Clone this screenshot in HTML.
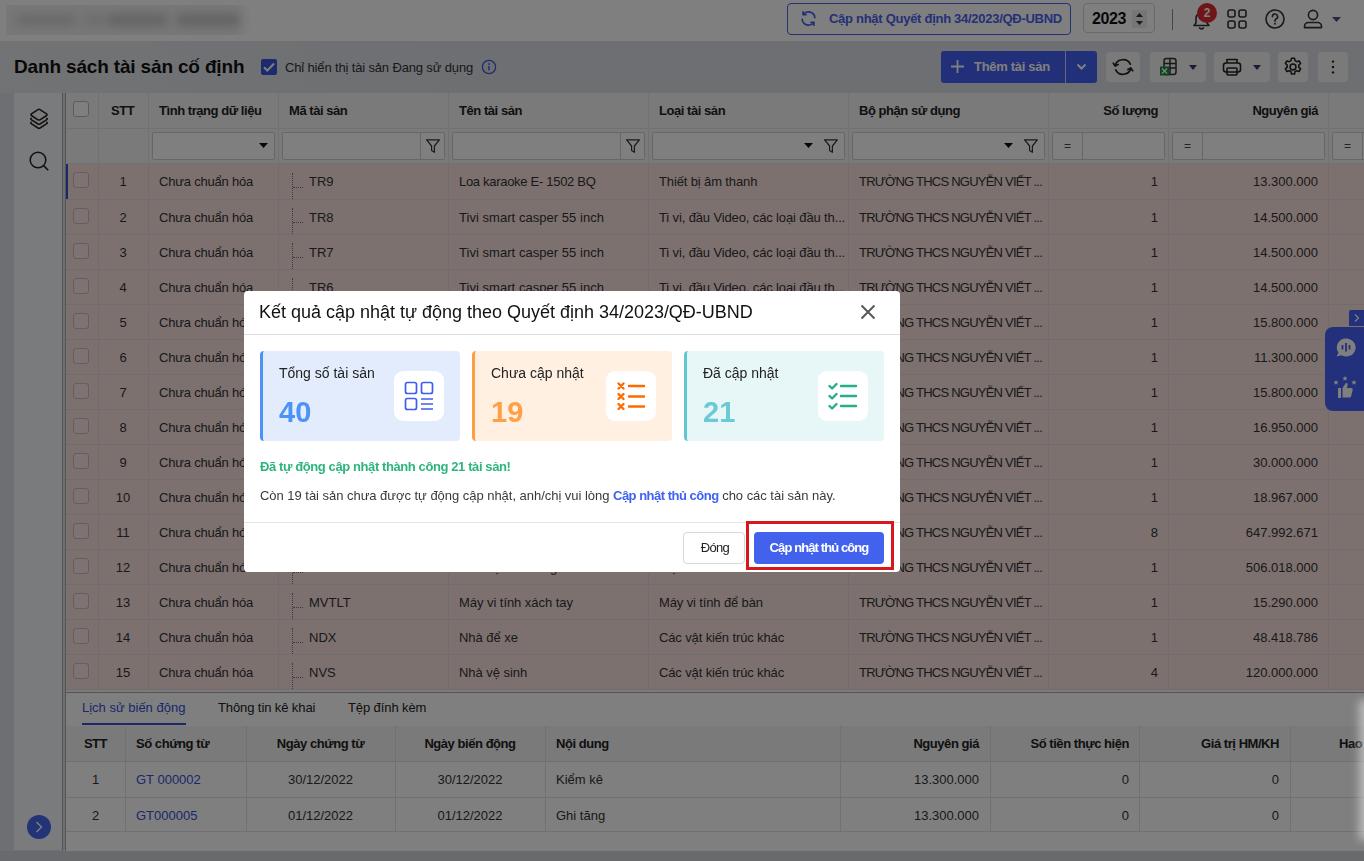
<!DOCTYPE html>
<html><head><meta charset="utf-8">
<style>
*{box-sizing:border-box;margin:0;padding:0}
svg{display:block}
html,body{width:1364px;height:861px;overflow:hidden}
body{font-family:"Liberation Sans",sans-serif;font-size:13px;color:#212121;background:#dcdfe5;position:relative}
.a{position:absolute}
.t{position:absolute;white-space:nowrap;line-height:16px}
.topbar{left:0;top:0;width:1364px;height:41px;background:#fff}
.hdr{left:0;top:41px;width:1364px;height:52px;background:linear-gradient(90deg,#e4e6ea 0,#dcdfe5 35%)}
.side{left:14px;top:93px;width:48px;height:757px;background:#f5f6f8}
.vline{top:93px;width:1px;height:757px;background:#a6a8ac}
.grid{left:66px;top:93px;width:1298px;height:600px;background:#f4f4f4;overflow:hidden}
.hcell{font-weight:700;color:#222;letter-spacing:-0.45px}
.row{position:absolute;left:0;width:1298px;height:35px;background:#fae2df;border-bottom:1px solid #e6d8d8}
.cb{position:absolute;width:16px;height:16px;border:1px solid #b9b9b9;border-radius:3px;background:#fff}
.vb{position:absolute;top:0;width:1px;height:599px;background:#e3e3e3}
.fbox{position:absolute;top:39px;height:28px;border:1px solid #cfcfcf;border-radius:2px;background:#fff}
.bottom{left:66px;top:693px;width:1298px;height:158px;background:#fff;overflow:hidden}
.overlay{left:0;top:0;width:1364px;height:861px;background:rgba(0,0,0,0.5)}
.modal{left:244px;top:291px;width:656px;height:281px;background:#fff;border-radius:4px;overflow:hidden;will-change:transform}
.card{position:absolute;top:60px;width:200px;height:90px;border-radius:4px}
.ibox{position:absolute;left:131px;top:20px;width:50px;height:50px;background:#fff;border-radius:9px}
.clabel{position:absolute;left:16px;top:13px;font-size:14px;line-height:18px;color:#222;white-space:nowrap}
.cnum{position:absolute;left:16px;top:45px;font-size:29px;line-height:32px;font-weight:700;white-space:nowrap}
</style></head>
<body>

<div class="a topbar"></div>
<div class="a" style="left:6px;top:5px;width:246px;height:30px;background:linear-gradient(90deg,#efefef 0,#efefef 93%,#fff 100%);overflow:hidden"><div class="a" style="left:10px;top:10px;width:60px;height:10px;border-radius:5px;background:#cfcfcf;filter:blur(5px)"></div><div class="a" style="left:78px;top:9px;width:20px;height:12px;border-radius:5px;background:#dadada;filter:blur(5px)"></div><div class="a" style="left:100px;top:9px;width:62px;height:12px;border-radius:5px;background:#c9c9c9;filter:blur(5px)"></div><div class="a" style="left:170px;top:9px;width:64px;height:12px;border-radius:5px;background:#c6c6c6;filter:blur(5px)"></div></div>
<div class="a" style="left:787px;top:3px;width:284px;height:32px;border:1px solid #4862ee;border-radius:4px;background:#fff"></div>
<svg class="a" style="left:799px;top:9px" width="19" height="19" viewBox="0 0 24 24"><g fill="none" stroke="#4862ee" stroke-width="2.2" stroke-linecap="round" stroke-linejoin="round"><path d="M20 11a8 8 0 0 0-14.3-4.3"/><path d="M5.2 3.5v3.6h3.6"/><path d="M4 13a8 8 0 0 0 14.3 4.3"/><path d="M18.8 20.5v-3.6h-3.6"/></g></svg>
<div class="t" style="left:829px;top:11px;font-weight:700;color:#4862ee;letter-spacing:-0.28px">Cập nhật Quyết định 34/2023/QĐ-UBND</div>
<div class="a" style="left:1083px;top:3px;width:72px;height:30px;border:1px solid #d2d2d2;border-radius:4px;background:#fff"></div>
<div class="t" style="left:1092px;top:9px;font-size:16px;line-height:19px;color:#111;font-weight:700;letter-spacing:-0.4px">2023</div>
<div class="a" style="left:1132px;top:10px;width:15px;height:18px;background:#ececec"></div>
<svg class="a" style="left:1135px;top:12px" width="9" height="14" viewBox="0 0 9 14"><path d="M4.5 1L8 5H1z M4.5 13L1 9h7z" fill="#333"/></svg>
<div class="a" style="left:1172px;top:9px;width:1px;height:21px;background:#8a8a8a"></div>
<svg class="a" style="left:1191px;top:10px" width="21" height="20" viewBox="0 0 21 20"><path d="M3 15.5h15l-2-2.6V8.3a5.5 5.5 0 0 0-11 0v4.6z" fill="none" stroke="#333" stroke-width="1.6" stroke-linejoin="round"/><path d="M8.3 17.3a2.3 2.3 0 0 0 4.4 0" fill="none" stroke="#333" stroke-width="1.6"/></svg>
<div class="a" style="left:1197px;top:3px;width:20px;height:20px;border-radius:50%;background:#dd2a2f;color:#fff;font-weight:700;font-size:12px;line-height:20px;text-align:center">2</div>
<svg class="a" style="left:1227px;top:9px" width="20" height="20" viewBox="0 0 20 20"><g fill="none" stroke="#333" stroke-width="1.6"><rect x="1" y="1" width="7" height="7" rx="2"/><rect x="12" y="1" width="7" height="7" rx="2"/><rect x="1" y="12" width="7" height="7" rx="2"/><rect x="12" y="12" width="7" height="7" rx="2"/></g></svg>
<svg class="a" style="left:1265px;top:9px" width="20" height="20" viewBox="0 0 20 20"><circle cx="10" cy="10" r="9" fill="none" stroke="#333" stroke-width="1.6"/><path d="M7.4 7.6a2.6 2.6 0 1 1 3.6 2.4c-.7.3-1 .8-1 1.5v.8" fill="none" stroke="#333" stroke-width="1.6" stroke-linecap="round"/><circle cx="10" cy="14.8" r="1" fill="#333"/></svg>
<svg class="a" style="left:1303px;top:9px" width="20" height="20" viewBox="0 0 20 20"><circle cx="10" cy="6" r="4.6" fill="none" stroke="#333" stroke-width="1.6"/><path d="M1.5 18.6v-1.2c0-2.2 1.8-3.9 4-3.9h9c2.2 0 4 1.7 4 3.9v1.2z" fill="none" stroke="#333" stroke-width="1.6" stroke-linejoin="round"/></svg>
<svg class="a" style="left:1332px;top:17px" width="9" height="5" viewBox="0 0 9 5"><path d="M0 0h9L4.5 5z" fill="#4a5578"/></svg>
<div class="a hdr"></div>
<div class="t" style="left:14px;top:56px;font-size:19px;line-height:22px;font-weight:700;color:#111;letter-spacing:-0.16px">Danh sách tài sản cố định</div>
<div class="a" style="left:261px;top:59px;width:16px;height:16px;border-radius:2px;background:#3a55dc"></div>
<svg class="a" style="left:261px;top:59px" width="16" height="16" viewBox="0 0 16 16"><path d="M3 8.2l3.3 3.3 6.8-7" fill="none" stroke="#fff" stroke-width="2"/></svg>
<div class="t" style="left:285px;top:60px;color:#333;letter-spacing:-0.15px">Chỉ hiển thị tài sản Đang sử dụng</div>
<svg class="a" style="left:481px;top:59px" width="16" height="16" viewBox="0 0 16 16"><circle cx="8" cy="8" r="6.6" fill="none" stroke="#3f5ad8" stroke-width="1.3"/><circle cx="8" cy="5" r="0.9" fill="#3f5ad8"/><path d="M8 7v4.6" stroke="#3f5ad8" stroke-width="1.4"/></svg>
<div class="a" style="left:941px;top:51px;width:156px;height:32px;border-radius:3px;background:#4460f4"></div>
<div class="a" style="left:1065px;top:51px;width:1px;height:32px;background:#c9d0f5"></div>
<svg class="a" style="left:950px;top:59px" width="15" height="15" viewBox="0 0 15 15"><path d="M7.5 1v13M1 7.5h13" stroke="#fff" stroke-width="1.8"/></svg>
<div class="t" style="left:974px;top:59px;color:#fff;font-weight:700;letter-spacing:-0.3px">Thêm tài sản</div>
<svg class="a" style="left:1076px;top:63px" width="11" height="8" viewBox="0 0 11 8"><path d="M1.5 1.5l4 4 4-4" fill="none" stroke="#fff" stroke-width="2"/></svg>
<div class="a" style="left:1106px;top:52px;width:34px;height:30px;border-radius:4px;background:#f4f5f7"></div>
<div class="a" style="left:1150px;top:52px;width:56px;height:30px;border-radius:4px;background:#f4f5f7"></div>
<div class="a" style="left:1214px;top:52px;width:56px;height:30px;border-radius:4px;background:#f4f5f7"></div>
<div class="a" style="left:1278px;top:52px;width:30px;height:30px;border-radius:4px;background:#f4f5f7"></div>
<div class="a" style="left:1318px;top:52px;width:30px;height:30px;border-radius:4px;background:#f4f5f7"></div>
<svg class="a" style="left:1112px;top:57px" width="22" height="20" viewBox="0 0 22 20"><g fill="none" stroke="#222" stroke-width="1.7" stroke-linecap="round" stroke-linejoin="round"><path d="M3.2 8.5A8 7.5 0 0 1 18.3 7.2"/><path d="M1.3 6.2l1.9 2.8 2.9-1.6"/><path d="M18.8 11.5A8 7.5 0 0 1 3.7 12.8"/><path d="M20.7 13.8l-1.9-2.8-2.9 1.6"/></g></svg>
<svg class="a" style="left:1159px;top:57px" width="20" height="20" viewBox="0 0 20 20"><rect x="5" y="1.5" width="12" height="16" rx="2.5" fill="none" stroke="#333" stroke-width="1.5"/><path d="M5 6.5h12M5 11h12M11 1.5v16" stroke="#333" stroke-width="1.5"/><rect x="1" y="9.5" width="9" height="9" fill="#1e8a3c"/><path d="M3 11.5l5 5M8 11.5l-5 5" stroke="#fff" stroke-width="1.4"/></svg>
<svg class="a" style="left:1189px;top:65px" width="8" height="5" viewBox="0 0 8 5"><path d="M0 0h8L4 5z" fill="#2f3a5a"/></svg>
<svg class="a" style="left:1222px;top:57px" width="20" height="20" viewBox="0 0 20 20"><g fill="none" stroke="#222" stroke-width="1.6" stroke-linejoin="round"><path d="M5 6V2.5h10V6"/><rect x="1.5" y="6" width="17" height="9" rx="2.5"/><rect x="5" y="11" width="10" height="7" rx="1"/></g></svg>
<svg class="a" style="left:1253px;top:65px" width="8" height="5" viewBox="0 0 8 5"><path d="M0 0h8L4 5z" fill="#2f3a5a"/></svg>
<svg class="a" style="left:1282px;top:56px" width="22" height="22" viewBox="0 0 24 24"><g fill="none" stroke="#222" stroke-width="1.7" stroke-linejoin="round"><path d="M10.3 2.5h3.4l.5 2.6 1.9 1.1 2.5-.9 1.7 2.9-2 1.8v2.2l2 1.8-1.7 2.9-2.5-.9-1.9 1.1-.5 2.6h-3.4l-.5-2.6-1.9-1.1-2.5.9-1.7-2.9 2-1.8v-2.2l-2-1.8 1.7-2.9 2.5.9 1.9-1.1z"/><circle cx="12" cy="12" r="3.2"/></g></svg>
<svg class="a" style="left:1330px;top:58px" width="6" height="18" viewBox="0 0 6 18"><circle cx="3" cy="3.6" r="1.2" fill="#222"/><circle cx="3" cy="9" r="1.2" fill="#222"/><circle cx="3" cy="14.4" r="1.2" fill="#222"/></svg>
<div class="a side"></div>
<svg class="a" style="left:29px;top:108px" width="20" height="21" viewBox="0 0 20 21"><g fill="none" stroke="#222" stroke-width="1.5" stroke-linejoin="round" stroke-linecap="round"><path d="M9 1.6q1-.6 2 0l6.6 4.3q1 .8 0 1.6L11 11.8q-1 .6-2 0L2.4 7.5q-1-.8 0-1.6z"/><path d="M2.2 10.3q-.9.7 0 1.4L9 16q1 .6 2 0l6.8-4.3q.9-.7 0-1.4"/><path d="M2.2 14.3q-.9.7 0 1.4L9 20q1 .6 2 0l6.8-4.3q.9-.7 0-1.4"/></g></svg>
<svg class="a" style="left:29px;top:151px" width="21" height="21" viewBox="0 0 21 21"><circle cx="9" cy="9" r="7.8" fill="none" stroke="#222" stroke-width="1.5"/><path d="M14.6 14.6l4.6 4.6" stroke="#222" stroke-width="1.6"/></svg>
<div class="a" style="left:27px;top:815px;width:24px;height:24px;border-radius:50%;background:#4568ec"></div>
<svg class="a" style="left:35px;top:821px" width="8" height="12" viewBox="0 0 8 12"><path d="M1.5 1l5 5-5 5" fill="none" stroke="#fff" stroke-width="1.4"/></svg>
<div class="a vline" style="left:62px"></div>
<div class="a vline" style="left:65px"></div>
<div class="a grid">
<div class="a" style="left:0;top:35px;width:1298px;height:1px;background:#e2e2e2"></div>
<div class="a" style="left:0;top:70px;width:1298px;height:1px;background:#e2e2e2"></div>
<div class="cb" style="left:7px;top:8px"></div>
<div class="vb" style="left:32px;height:71px"></div>
<div class="vb" style="left:82px;height:71px"></div>
<div class="vb" style="left:212px;height:71px"></div>
<div class="vb" style="left:382px;height:71px"></div>
<div class="vb" style="left:582px;height:71px"></div>
<div class="vb" style="left:782px;height:71px"></div>
<div class="vb" style="left:982px;height:71px"></div>
<div class="vb" style="left:1102px;height:71px"></div>
<div class="vb" style="left:1262px;height:71px"></div>
<div class="t hcell" style="left:45px;top:10px">STT</div>
<div class="t hcell" style="left:93px;top:10px">Tình trạng dữ liệu</div>
<div class="t hcell" style="left:223px;top:10px">Mã tài sản</div>
<div class="t hcell" style="left:393px;top:10px">Tên tài sản</div>
<div class="t hcell" style="left:593px;top:10px">Loại tài sản</div>
<div class="t hcell" style="left:793px;top:10px">Bộ phận sử dụng</div>
<div class="t hcell" style="right:206px;top:10px">Số lượng</div>
<div class="t hcell" style="right:46px;top:10px">Nguyên giá</div>
<div class="fbox" style="left:86px;width:123px"></div>
<div class="a" style="left:193px;top:50px"><svg width="9" height="5" viewBox="0 0 9 5"><path d="M0 0h9L4.5 5z" fill="#111"/></svg></div>
<div class="fbox" style="left:216px;width:163px"></div>
<div class="a" style="left:354px;top:39px;width:1px;height:28px;background:#cfcfcf"></div><div class="a" style="left:359px;top:45px"><svg width="16" height="16" viewBox="0 0 16 16"><path d="M1.6 1.8h12.8l-5 6.2v6.3l-2.8-1.8V8z" fill="none" stroke="#333" stroke-width="1.2" stroke-linejoin="round"/></svg></div>
<div class="fbox" style="left:386px;width:193px"></div>
<div class="a" style="left:554px;top:39px;width:1px;height:28px;background:#cfcfcf"></div><div class="a" style="left:559px;top:45px"><svg width="16" height="16" viewBox="0 0 16 16"><path d="M1.6 1.8h12.8l-5 6.2v6.3l-2.8-1.8V8z" fill="none" stroke="#333" stroke-width="1.2" stroke-linejoin="round"/></svg></div>
<div class="fbox" style="left:586px;width:193px"></div>
<div class="a" style="left:738px;top:50px"><svg width="9" height="5" viewBox="0 0 9 5"><path d="M0 0h9L4.5 5z" fill="#111"/></svg></div><div class="a" style="left:757px;top:45px"><svg width="16" height="16" viewBox="0 0 16 16"><path d="M1.6 1.8h12.8l-5 6.2v6.3l-2.8-1.8V8z" fill="none" stroke="#333" stroke-width="1.2" stroke-linejoin="round"/></svg></div>
<div class="fbox" style="left:786px;width:193px"></div>
<div class="a" style="left:938px;top:50px"><svg width="9" height="5" viewBox="0 0 9 5"><path d="M0 0h9L4.5 5z" fill="#111"/></svg></div><div class="a" style="left:957px;top:45px"><svg width="16" height="16" viewBox="0 0 16 16"><path d="M1.6 1.8h12.8l-5 6.2v6.3l-2.8-1.8V8z" fill="none" stroke="#333" stroke-width="1.2" stroke-linejoin="round"/></svg></div>
<div class="fbox" style="left:986px;width:113px"></div>
<div class="a" style="left:1016px;top:39px;width:1px;height:28px;background:#cfcfcf"></div>
<div class="t" style="left:998px;top:45px;font-size:12px;color:#444">=</div>
<div class="fbox" style="left:1106px;width:153px"></div>
<div class="a" style="left:1136px;top:39px;width:1px;height:28px;background:#cfcfcf"></div>
<div class="t" style="left:1118px;top:45px;font-size:12px;color:#444">=</div>
<div class="fbox" style="left:1266px;width:68px"></div>
<div class="a" style="left:1296px;top:39px;width:1px;height:28px;background:#cfcfcf"></div>
<div class="t" style="left:1278px;top:45px;font-size:12px;color:#444">=</div>
<div class="row" style="top:72px">
<div class="cb" style="left:7px;top:7px;background:#fbe6e4;border-color:#c9bcbb"></div>
<div class="a" style="left:32px;top:0;width:1px;height:35px;background:#e6d9d9"></div>
<div class="a" style="left:82px;top:0;width:1px;height:35px;background:#e6d9d9"></div>
<div class="a" style="left:212px;top:0;width:1px;height:35px;background:#e6d9d9"></div>
<div class="a" style="left:382px;top:0;width:1px;height:35px;background:#e6d9d9"></div>
<div class="a" style="left:582px;top:0;width:1px;height:35px;background:#e6d9d9"></div>
<div class="a" style="left:782px;top:0;width:1px;height:35px;background:#e6d9d9"></div>
<div class="a" style="left:982px;top:0;width:1px;height:35px;background:#e6d9d9"></div>
<div class="a" style="left:1102px;top:0;width:1px;height:35px;background:#e6d9d9"></div>
<div class="a" style="left:1262px;top:0;width:1px;height:35px;background:#e6d9d9"></div>
<div class="t" style="left:32px;width:50px;text-align:center;top:9px;color:#333">1</div>
<div class="t" style="left:93px;top:9px;color:#333;letter-spacing:-0.2px">Chưa chuẩn hóa</div>
<div class="a" style="left:226px;top:8px;width:0;height:26px;border-left:1px dotted #777"></div>
<div class="a" style="left:227px;top:22px;width:10px;height:0;border-top:1px dotted #777"></div>
<div class="t" style="left:243px;top:9px;color:#333">TR9</div>
<div class="t" style="left:393px;top:9px;color:#333;letter-spacing:-0.3px">Loa karaoke E- 1502 BQ</div>
<div class="t" style="left:593px;top:9px;color:#333;letter-spacing:-0.13px;width:188px;overflow:hidden">Thiết bị âm thanh</div>
<div class="t" style="left:793px;top:9px;color:#333;letter-spacing:-0.77px">TRƯỜNG THCS NGUYỄN VIẾT ...</div>
<div class="t" style="right:206px;top:9px;color:#333">1</div>
<div class="t" style="right:46px;top:9px;color:#333">13.300.000</div>
</div>
<div class="row" style="top:107px">
<div class="cb" style="left:7px;top:8px;background:#fbe6e4;border-color:#c9bcbb"></div>
<div class="a" style="left:32px;top:0;width:1px;height:35px;background:#e6d9d9"></div>
<div class="a" style="left:82px;top:0;width:1px;height:35px;background:#e6d9d9"></div>
<div class="a" style="left:212px;top:0;width:1px;height:35px;background:#e6d9d9"></div>
<div class="a" style="left:382px;top:0;width:1px;height:35px;background:#e6d9d9"></div>
<div class="a" style="left:582px;top:0;width:1px;height:35px;background:#e6d9d9"></div>
<div class="a" style="left:782px;top:0;width:1px;height:35px;background:#e6d9d9"></div>
<div class="a" style="left:982px;top:0;width:1px;height:35px;background:#e6d9d9"></div>
<div class="a" style="left:1102px;top:0;width:1px;height:35px;background:#e6d9d9"></div>
<div class="a" style="left:1262px;top:0;width:1px;height:35px;background:#e6d9d9"></div>
<div class="t" style="left:32px;width:50px;text-align:center;top:10px;color:#333">2</div>
<div class="t" style="left:93px;top:10px;color:#333;letter-spacing:-0.2px">Chưa chuẩn hóa</div>
<div class="a" style="left:226px;top:8px;width:0;height:26px;border-left:1px dotted #777"></div>
<div class="a" style="left:227px;top:22px;width:10px;height:0;border-top:1px dotted #777"></div>
<div class="t" style="left:243px;top:10px;color:#333">TR8</div>
<div class="t" style="left:393px;top:10px;color:#333;letter-spacing:0.04px">Tivi smart casper 55 inch</div>
<div class="t" style="left:593px;top:10px;color:#333;letter-spacing:-0.13px;width:188px;overflow:hidden">Ti vi, đầu Video, các loại đầu th...</div>
<div class="t" style="left:793px;top:10px;color:#333;letter-spacing:-0.77px">TRƯỜNG THCS NGUYỄN VIẾT ...</div>
<div class="t" style="right:206px;top:10px;color:#333">1</div>
<div class="t" style="right:46px;top:10px;color:#333">14.500.000</div>
</div>
<div class="row" style="top:142px">
<div class="cb" style="left:7px;top:8px;background:#fbe6e4;border-color:#c9bcbb"></div>
<div class="a" style="left:32px;top:0;width:1px;height:35px;background:#e6d9d9"></div>
<div class="a" style="left:82px;top:0;width:1px;height:35px;background:#e6d9d9"></div>
<div class="a" style="left:212px;top:0;width:1px;height:35px;background:#e6d9d9"></div>
<div class="a" style="left:382px;top:0;width:1px;height:35px;background:#e6d9d9"></div>
<div class="a" style="left:582px;top:0;width:1px;height:35px;background:#e6d9d9"></div>
<div class="a" style="left:782px;top:0;width:1px;height:35px;background:#e6d9d9"></div>
<div class="a" style="left:982px;top:0;width:1px;height:35px;background:#e6d9d9"></div>
<div class="a" style="left:1102px;top:0;width:1px;height:35px;background:#e6d9d9"></div>
<div class="a" style="left:1262px;top:0;width:1px;height:35px;background:#e6d9d9"></div>
<div class="t" style="left:32px;width:50px;text-align:center;top:10px;color:#333">3</div>
<div class="t" style="left:93px;top:10px;color:#333;letter-spacing:-0.2px">Chưa chuẩn hóa</div>
<div class="a" style="left:226px;top:8px;width:0;height:26px;border-left:1px dotted #777"></div>
<div class="a" style="left:227px;top:22px;width:10px;height:0;border-top:1px dotted #777"></div>
<div class="t" style="left:243px;top:10px;color:#333">TR7</div>
<div class="t" style="left:393px;top:10px;color:#333;letter-spacing:0.04px">Tivi smart casper 55 inch</div>
<div class="t" style="left:593px;top:10px;color:#333;letter-spacing:-0.13px;width:188px;overflow:hidden">Ti vi, đầu Video, các loại đầu th...</div>
<div class="t" style="left:793px;top:10px;color:#333;letter-spacing:-0.77px">TRƯỜNG THCS NGUYỄN VIẾT ...</div>
<div class="t" style="right:206px;top:10px;color:#333">1</div>
<div class="t" style="right:46px;top:10px;color:#333">14.500.000</div>
</div>
<div class="row" style="top:177px">
<div class="cb" style="left:7px;top:8px;background:#fbe6e4;border-color:#c9bcbb"></div>
<div class="a" style="left:32px;top:0;width:1px;height:35px;background:#e6d9d9"></div>
<div class="a" style="left:82px;top:0;width:1px;height:35px;background:#e6d9d9"></div>
<div class="a" style="left:212px;top:0;width:1px;height:35px;background:#e6d9d9"></div>
<div class="a" style="left:382px;top:0;width:1px;height:35px;background:#e6d9d9"></div>
<div class="a" style="left:582px;top:0;width:1px;height:35px;background:#e6d9d9"></div>
<div class="a" style="left:782px;top:0;width:1px;height:35px;background:#e6d9d9"></div>
<div class="a" style="left:982px;top:0;width:1px;height:35px;background:#e6d9d9"></div>
<div class="a" style="left:1102px;top:0;width:1px;height:35px;background:#e6d9d9"></div>
<div class="a" style="left:1262px;top:0;width:1px;height:35px;background:#e6d9d9"></div>
<div class="t" style="left:32px;width:50px;text-align:center;top:10px;color:#333">4</div>
<div class="t" style="left:93px;top:10px;color:#333;letter-spacing:-0.2px">Chưa chuẩn hóa</div>
<div class="a" style="left:226px;top:8px;width:0;height:26px;border-left:1px dotted #777"></div>
<div class="a" style="left:227px;top:22px;width:10px;height:0;border-top:1px dotted #777"></div>
<div class="t" style="left:243px;top:10px;color:#333">TR6</div>
<div class="t" style="left:393px;top:10px;color:#333;letter-spacing:0.04px">Tivi smart casper 55 inch</div>
<div class="t" style="left:593px;top:10px;color:#333;letter-spacing:-0.13px;width:188px;overflow:hidden">Ti vi, đầu Video, các loại đầu th...</div>
<div class="t" style="left:793px;top:10px;color:#333;letter-spacing:-0.77px">TRƯỜNG THCS NGUYỄN VIẾT ...</div>
<div class="t" style="right:206px;top:10px;color:#333">1</div>
<div class="t" style="right:46px;top:10px;color:#333">14.500.000</div>
</div>
<div class="row" style="top:212px">
<div class="cb" style="left:7px;top:8px;background:#fbe6e4;border-color:#c9bcbb"></div>
<div class="a" style="left:32px;top:0;width:1px;height:35px;background:#e6d9d9"></div>
<div class="a" style="left:82px;top:0;width:1px;height:35px;background:#e6d9d9"></div>
<div class="a" style="left:212px;top:0;width:1px;height:35px;background:#e6d9d9"></div>
<div class="a" style="left:382px;top:0;width:1px;height:35px;background:#e6d9d9"></div>
<div class="a" style="left:582px;top:0;width:1px;height:35px;background:#e6d9d9"></div>
<div class="a" style="left:782px;top:0;width:1px;height:35px;background:#e6d9d9"></div>
<div class="a" style="left:982px;top:0;width:1px;height:35px;background:#e6d9d9"></div>
<div class="a" style="left:1102px;top:0;width:1px;height:35px;background:#e6d9d9"></div>
<div class="a" style="left:1262px;top:0;width:1px;height:35px;background:#e6d9d9"></div>
<div class="t" style="left:32px;width:50px;text-align:center;top:10px;color:#333">5</div>
<div class="t" style="left:93px;top:10px;color:#333;letter-spacing:-0.2px">Chưa chuẩn hóa</div>
<div class="a" style="left:226px;top:8px;width:0;height:26px;border-left:1px dotted #777"></div>
<div class="a" style="left:227px;top:22px;width:10px;height:0;border-top:1px dotted #777"></div>
<div class="t" style="left:243px;top:10px;color:#333">TR5</div>
<div class="t" style="left:393px;top:10px;color:#333;letter-spacing:0.04px">Tivi smart casper 55 inch</div>
<div class="t" style="left:593px;top:10px;color:#333;letter-spacing:-0.13px;width:188px;overflow:hidden">Ti vi, đầu Video, các loại đầu th...</div>
<div class="t" style="left:793px;top:10px;color:#333;letter-spacing:-0.77px">TRƯỜNG THCS NGUYỄN VIẾT ...</div>
<div class="t" style="right:206px;top:10px;color:#333">1</div>
<div class="t" style="right:46px;top:10px;color:#333">15.800.000</div>
</div>
<div class="row" style="top:247px">
<div class="cb" style="left:7px;top:8px;background:#fbe6e4;border-color:#c9bcbb"></div>
<div class="a" style="left:32px;top:0;width:1px;height:35px;background:#e6d9d9"></div>
<div class="a" style="left:82px;top:0;width:1px;height:35px;background:#e6d9d9"></div>
<div class="a" style="left:212px;top:0;width:1px;height:35px;background:#e6d9d9"></div>
<div class="a" style="left:382px;top:0;width:1px;height:35px;background:#e6d9d9"></div>
<div class="a" style="left:582px;top:0;width:1px;height:35px;background:#e6d9d9"></div>
<div class="a" style="left:782px;top:0;width:1px;height:35px;background:#e6d9d9"></div>
<div class="a" style="left:982px;top:0;width:1px;height:35px;background:#e6d9d9"></div>
<div class="a" style="left:1102px;top:0;width:1px;height:35px;background:#e6d9d9"></div>
<div class="a" style="left:1262px;top:0;width:1px;height:35px;background:#e6d9d9"></div>
<div class="t" style="left:32px;width:50px;text-align:center;top:10px;color:#333">6</div>
<div class="t" style="left:93px;top:10px;color:#333;letter-spacing:-0.2px">Chưa chuẩn hóa</div>
<div class="a" style="left:226px;top:8px;width:0;height:26px;border-left:1px dotted #777"></div>
<div class="a" style="left:227px;top:22px;width:10px;height:0;border-top:1px dotted #777"></div>
<div class="t" style="left:243px;top:10px;color:#333">TR4</div>
<div class="t" style="left:393px;top:10px;color:#333;letter-spacing:-0.05px">Máy chiếu</div>
<div class="t" style="left:593px;top:10px;color:#333;letter-spacing:-0.13px;width:188px;overflow:hidden">Máy chiếu</div>
<div class="t" style="left:793px;top:10px;color:#333;letter-spacing:-0.77px">TRƯỜNG THCS NGUYỄN VIẾT ...</div>
<div class="t" style="right:206px;top:10px;color:#333">1</div>
<div class="t" style="right:46px;top:10px;color:#333">11.300.000</div>
</div>
<div class="row" style="top:282px">
<div class="cb" style="left:7px;top:8px;background:#fbe6e4;border-color:#c9bcbb"></div>
<div class="a" style="left:32px;top:0;width:1px;height:35px;background:#e6d9d9"></div>
<div class="a" style="left:82px;top:0;width:1px;height:35px;background:#e6d9d9"></div>
<div class="a" style="left:212px;top:0;width:1px;height:35px;background:#e6d9d9"></div>
<div class="a" style="left:382px;top:0;width:1px;height:35px;background:#e6d9d9"></div>
<div class="a" style="left:582px;top:0;width:1px;height:35px;background:#e6d9d9"></div>
<div class="a" style="left:782px;top:0;width:1px;height:35px;background:#e6d9d9"></div>
<div class="a" style="left:982px;top:0;width:1px;height:35px;background:#e6d9d9"></div>
<div class="a" style="left:1102px;top:0;width:1px;height:35px;background:#e6d9d9"></div>
<div class="a" style="left:1262px;top:0;width:1px;height:35px;background:#e6d9d9"></div>
<div class="t" style="left:32px;width:50px;text-align:center;top:10px;color:#333">7</div>
<div class="t" style="left:93px;top:10px;color:#333;letter-spacing:-0.2px">Chưa chuẩn hóa</div>
<div class="a" style="left:226px;top:8px;width:0;height:26px;border-left:1px dotted #777"></div>
<div class="a" style="left:227px;top:22px;width:10px;height:0;border-top:1px dotted #777"></div>
<div class="t" style="left:243px;top:10px;color:#333">TR3</div>
<div class="t" style="left:393px;top:10px;color:#333;letter-spacing:0.04px">Tivi smart casper 55 inch</div>
<div class="t" style="left:593px;top:10px;color:#333;letter-spacing:-0.13px;width:188px;overflow:hidden">Ti vi, đầu Video, các loại đầu th...</div>
<div class="t" style="left:793px;top:10px;color:#333;letter-spacing:-0.77px">TRƯỜNG THCS NGUYỄN VIẾT ...</div>
<div class="t" style="right:206px;top:10px;color:#333">1</div>
<div class="t" style="right:46px;top:10px;color:#333">15.800.000</div>
</div>
<div class="row" style="top:317px">
<div class="cb" style="left:7px;top:8px;background:#fbe6e4;border-color:#c9bcbb"></div>
<div class="a" style="left:32px;top:0;width:1px;height:35px;background:#e6d9d9"></div>
<div class="a" style="left:82px;top:0;width:1px;height:35px;background:#e6d9d9"></div>
<div class="a" style="left:212px;top:0;width:1px;height:35px;background:#e6d9d9"></div>
<div class="a" style="left:382px;top:0;width:1px;height:35px;background:#e6d9d9"></div>
<div class="a" style="left:582px;top:0;width:1px;height:35px;background:#e6d9d9"></div>
<div class="a" style="left:782px;top:0;width:1px;height:35px;background:#e6d9d9"></div>
<div class="a" style="left:982px;top:0;width:1px;height:35px;background:#e6d9d9"></div>
<div class="a" style="left:1102px;top:0;width:1px;height:35px;background:#e6d9d9"></div>
<div class="a" style="left:1262px;top:0;width:1px;height:35px;background:#e6d9d9"></div>
<div class="t" style="left:32px;width:50px;text-align:center;top:10px;color:#333">8</div>
<div class="t" style="left:93px;top:10px;color:#333;letter-spacing:-0.2px">Chưa chuẩn hóa</div>
<div class="a" style="left:226px;top:8px;width:0;height:26px;border-left:1px dotted #777"></div>
<div class="a" style="left:227px;top:22px;width:10px;height:0;border-top:1px dotted #777"></div>
<div class="t" style="left:243px;top:10px;color:#333">TR2</div>
<div class="t" style="left:393px;top:10px;color:#333;letter-spacing:-0.05px">Máy vi tính</div>
<div class="t" style="left:593px;top:10px;color:#333;letter-spacing:-0.13px;width:188px;overflow:hidden">Máy vi tính để bàn</div>
<div class="t" style="left:793px;top:10px;color:#333;letter-spacing:-0.77px">TRƯỜNG THCS NGUYỄN VIẾT ...</div>
<div class="t" style="right:206px;top:10px;color:#333">1</div>
<div class="t" style="right:46px;top:10px;color:#333">16.950.000</div>
</div>
<div class="row" style="top:352px">
<div class="cb" style="left:7px;top:8px;background:#fbe6e4;border-color:#c9bcbb"></div>
<div class="a" style="left:32px;top:0;width:1px;height:35px;background:#e6d9d9"></div>
<div class="a" style="left:82px;top:0;width:1px;height:35px;background:#e6d9d9"></div>
<div class="a" style="left:212px;top:0;width:1px;height:35px;background:#e6d9d9"></div>
<div class="a" style="left:382px;top:0;width:1px;height:35px;background:#e6d9d9"></div>
<div class="a" style="left:582px;top:0;width:1px;height:35px;background:#e6d9d9"></div>
<div class="a" style="left:782px;top:0;width:1px;height:35px;background:#e6d9d9"></div>
<div class="a" style="left:982px;top:0;width:1px;height:35px;background:#e6d9d9"></div>
<div class="a" style="left:1102px;top:0;width:1px;height:35px;background:#e6d9d9"></div>
<div class="a" style="left:1262px;top:0;width:1px;height:35px;background:#e6d9d9"></div>
<div class="t" style="left:32px;width:50px;text-align:center;top:10px;color:#333">9</div>
<div class="t" style="left:93px;top:10px;color:#333;letter-spacing:-0.2px">Chưa chuẩn hóa</div>
<div class="a" style="left:226px;top:8px;width:0;height:26px;border-left:1px dotted #777"></div>
<div class="a" style="left:227px;top:22px;width:10px;height:0;border-top:1px dotted #777"></div>
<div class="t" style="left:243px;top:10px;color:#333">TR1</div>
<div class="t" style="left:393px;top:10px;color:#333;letter-spacing:-0.05px">Máy photocopy</div>
<div class="t" style="left:593px;top:10px;color:#333;letter-spacing:-0.13px;width:188px;overflow:hidden">Máy photocopy</div>
<div class="t" style="left:793px;top:10px;color:#333;letter-spacing:-0.77px">TRƯỜNG THCS NGUYỄN VIẾT ...</div>
<div class="t" style="right:206px;top:10px;color:#333">1</div>
<div class="t" style="right:46px;top:10px;color:#333">30.000.000</div>
</div>
<div class="row" style="top:387px">
<div class="cb" style="left:7px;top:8px;background:#fbe6e4;border-color:#c9bcbb"></div>
<div class="a" style="left:32px;top:0;width:1px;height:35px;background:#e6d9d9"></div>
<div class="a" style="left:82px;top:0;width:1px;height:35px;background:#e6d9d9"></div>
<div class="a" style="left:212px;top:0;width:1px;height:35px;background:#e6d9d9"></div>
<div class="a" style="left:382px;top:0;width:1px;height:35px;background:#e6d9d9"></div>
<div class="a" style="left:582px;top:0;width:1px;height:35px;background:#e6d9d9"></div>
<div class="a" style="left:782px;top:0;width:1px;height:35px;background:#e6d9d9"></div>
<div class="a" style="left:982px;top:0;width:1px;height:35px;background:#e6d9d9"></div>
<div class="a" style="left:1102px;top:0;width:1px;height:35px;background:#e6d9d9"></div>
<div class="a" style="left:1262px;top:0;width:1px;height:35px;background:#e6d9d9"></div>
<div class="t" style="left:32px;width:50px;text-align:center;top:10px;color:#333">10</div>
<div class="t" style="left:93px;top:10px;color:#333;letter-spacing:-0.2px">Chưa chuẩn hóa</div>
<div class="a" style="left:226px;top:8px;width:0;height:26px;border-left:1px dotted #777"></div>
<div class="a" style="left:227px;top:22px;width:10px;height:0;border-top:1px dotted #777"></div>
<div class="t" style="left:243px;top:10px;color:#333">MT</div>
<div class="t" style="left:393px;top:10px;color:#333;letter-spacing:-0.05px">Máy tính</div>
<div class="t" style="left:593px;top:10px;color:#333;letter-spacing:-0.13px;width:188px;overflow:hidden">Máy vi tính để bàn</div>
<div class="t" style="left:793px;top:10px;color:#333;letter-spacing:-0.77px">TRƯỜNG THCS NGUYỄN VIẾT ...</div>
<div class="t" style="right:206px;top:10px;color:#333">1</div>
<div class="t" style="right:46px;top:10px;color:#333">18.967.000</div>
</div>
<div class="row" style="top:422px">
<div class="cb" style="left:7px;top:8px;background:#fbe6e4;border-color:#c9bcbb"></div>
<div class="a" style="left:32px;top:0;width:1px;height:35px;background:#e6d9d9"></div>
<div class="a" style="left:82px;top:0;width:1px;height:35px;background:#e6d9d9"></div>
<div class="a" style="left:212px;top:0;width:1px;height:35px;background:#e6d9d9"></div>
<div class="a" style="left:382px;top:0;width:1px;height:35px;background:#e6d9d9"></div>
<div class="a" style="left:582px;top:0;width:1px;height:35px;background:#e6d9d9"></div>
<div class="a" style="left:782px;top:0;width:1px;height:35px;background:#e6d9d9"></div>
<div class="a" style="left:982px;top:0;width:1px;height:35px;background:#e6d9d9"></div>
<div class="a" style="left:1102px;top:0;width:1px;height:35px;background:#e6d9d9"></div>
<div class="a" style="left:1262px;top:0;width:1px;height:35px;background:#e6d9d9"></div>
<div class="t" style="left:32px;width:50px;text-align:center;top:10px;color:#333">11</div>
<div class="t" style="left:93px;top:10px;color:#333;letter-spacing:-0.2px">Chưa chuẩn hóa</div>
<div class="a" style="left:226px;top:8px;width:0;height:26px;border-left:1px dotted #777"></div>
<div class="a" style="left:227px;top:22px;width:10px;height:0;border-top:1px dotted #777"></div>
<div class="t" style="left:243px;top:10px;color:#333">BGV</div>
<div class="t" style="left:393px;top:10px;color:#333;letter-spacing:-0.05px">Bàn ghế giáo viên</div>
<div class="t" style="left:593px;top:10px;color:#333;letter-spacing:-0.13px;width:188px;overflow:hidden">Bàn ghế</div>
<div class="t" style="left:793px;top:10px;color:#333;letter-spacing:-0.77px">TRƯỜNG THCS NGUYỄN VIẾT ...</div>
<div class="t" style="right:206px;top:10px;color:#333">8</div>
<div class="t" style="right:46px;top:10px;color:#333">647.992.671</div>
</div>
<div class="row" style="top:457px">
<div class="cb" style="left:7px;top:8px;background:#fbe6e4;border-color:#c9bcbb"></div>
<div class="a" style="left:32px;top:0;width:1px;height:35px;background:#e6d9d9"></div>
<div class="a" style="left:82px;top:0;width:1px;height:35px;background:#e6d9d9"></div>
<div class="a" style="left:212px;top:0;width:1px;height:35px;background:#e6d9d9"></div>
<div class="a" style="left:382px;top:0;width:1px;height:35px;background:#e6d9d9"></div>
<div class="a" style="left:582px;top:0;width:1px;height:35px;background:#e6d9d9"></div>
<div class="a" style="left:782px;top:0;width:1px;height:35px;background:#e6d9d9"></div>
<div class="a" style="left:982px;top:0;width:1px;height:35px;background:#e6d9d9"></div>
<div class="a" style="left:1102px;top:0;width:1px;height:35px;background:#e6d9d9"></div>
<div class="a" style="left:1262px;top:0;width:1px;height:35px;background:#e6d9d9"></div>
<div class="t" style="left:32px;width:50px;text-align:center;top:10px;color:#333">12</div>
<div class="t" style="left:93px;top:10px;color:#333;letter-spacing:-0.2px">Chưa chuẩn hóa</div>
<div class="a" style="left:226px;top:8px;width:0;height:26px;border-left:1px dotted #777"></div>
<div class="a" style="left:227px;top:22px;width:10px;height:0;border-top:1px dotted #777"></div>
<div class="t" style="left:243px;top:10px;color:#333">NLH</div>
<div class="t" style="left:393px;top:10px;color:#333;letter-spacing:-0.05px">Nhà học A 2 tầng</div>
<div class="t" style="left:593px;top:10px;color:#333;letter-spacing:-0.13px;width:188px;overflow:hidden">Trụ sở</div>
<div class="t" style="left:793px;top:10px;color:#333;letter-spacing:-0.77px">TRƯỜNG THCS NGUYỄN VIẾT ...</div>
<div class="t" style="right:206px;top:10px;color:#333">1</div>
<div class="t" style="right:46px;top:10px;color:#333">506.018.000</div>
</div>
<div class="row" style="top:492px">
<div class="cb" style="left:7px;top:8px;background:#fbe6e4;border-color:#c9bcbb"></div>
<div class="a" style="left:32px;top:0;width:1px;height:35px;background:#e6d9d9"></div>
<div class="a" style="left:82px;top:0;width:1px;height:35px;background:#e6d9d9"></div>
<div class="a" style="left:212px;top:0;width:1px;height:35px;background:#e6d9d9"></div>
<div class="a" style="left:382px;top:0;width:1px;height:35px;background:#e6d9d9"></div>
<div class="a" style="left:582px;top:0;width:1px;height:35px;background:#e6d9d9"></div>
<div class="a" style="left:782px;top:0;width:1px;height:35px;background:#e6d9d9"></div>
<div class="a" style="left:982px;top:0;width:1px;height:35px;background:#e6d9d9"></div>
<div class="a" style="left:1102px;top:0;width:1px;height:35px;background:#e6d9d9"></div>
<div class="a" style="left:1262px;top:0;width:1px;height:35px;background:#e6d9d9"></div>
<div class="t" style="left:32px;width:50px;text-align:center;top:10px;color:#333">13</div>
<div class="t" style="left:93px;top:10px;color:#333;letter-spacing:-0.2px">Chưa chuẩn hóa</div>
<div class="a" style="left:226px;top:8px;width:0;height:26px;border-left:1px dotted #777"></div>
<div class="a" style="left:227px;top:22px;width:10px;height:0;border-top:1px dotted #777"></div>
<div class="t" style="left:243px;top:10px;color:#333">MVTLT</div>
<div class="t" style="left:393px;top:10px;color:#333;letter-spacing:-0.05px">Máy vi tính xách tay</div>
<div class="t" style="left:593px;top:10px;color:#333;letter-spacing:-0.13px;width:188px;overflow:hidden">Máy vi tính để bàn</div>
<div class="t" style="left:793px;top:10px;color:#333;letter-spacing:-0.77px">TRƯỜNG THCS NGUYỄN VIẾT ...</div>
<div class="t" style="right:206px;top:10px;color:#333">1</div>
<div class="t" style="right:46px;top:10px;color:#333">15.290.000</div>
</div>
<div class="row" style="top:527px">
<div class="cb" style="left:7px;top:8px;background:#fbe6e4;border-color:#c9bcbb"></div>
<div class="a" style="left:32px;top:0;width:1px;height:35px;background:#e6d9d9"></div>
<div class="a" style="left:82px;top:0;width:1px;height:35px;background:#e6d9d9"></div>
<div class="a" style="left:212px;top:0;width:1px;height:35px;background:#e6d9d9"></div>
<div class="a" style="left:382px;top:0;width:1px;height:35px;background:#e6d9d9"></div>
<div class="a" style="left:582px;top:0;width:1px;height:35px;background:#e6d9d9"></div>
<div class="a" style="left:782px;top:0;width:1px;height:35px;background:#e6d9d9"></div>
<div class="a" style="left:982px;top:0;width:1px;height:35px;background:#e6d9d9"></div>
<div class="a" style="left:1102px;top:0;width:1px;height:35px;background:#e6d9d9"></div>
<div class="a" style="left:1262px;top:0;width:1px;height:35px;background:#e6d9d9"></div>
<div class="t" style="left:32px;width:50px;text-align:center;top:10px;color:#333">14</div>
<div class="t" style="left:93px;top:10px;color:#333;letter-spacing:-0.2px">Chưa chuẩn hóa</div>
<div class="a" style="left:226px;top:8px;width:0;height:26px;border-left:1px dotted #777"></div>
<div class="a" style="left:227px;top:22px;width:10px;height:0;border-top:1px dotted #777"></div>
<div class="t" style="left:243px;top:10px;color:#333">NDX</div>
<div class="t" style="left:393px;top:10px;color:#333;letter-spacing:-0.05px">Nhà để xe</div>
<div class="t" style="left:593px;top:10px;color:#333;letter-spacing:-0.13px;width:188px;overflow:hidden">Các vật kiến trúc khác</div>
<div class="t" style="left:793px;top:10px;color:#333;letter-spacing:-0.77px">TRƯỜNG THCS NGUYỄN VIẾT ...</div>
<div class="t" style="right:206px;top:10px;color:#333">1</div>
<div class="t" style="right:46px;top:10px;color:#333">48.418.786</div>
</div>
<div class="row" style="top:562px">
<div class="cb" style="left:7px;top:8px;background:#fbe6e4;border-color:#c9bcbb"></div>
<div class="a" style="left:32px;top:0;width:1px;height:35px;background:#e6d9d9"></div>
<div class="a" style="left:82px;top:0;width:1px;height:35px;background:#e6d9d9"></div>
<div class="a" style="left:212px;top:0;width:1px;height:35px;background:#e6d9d9"></div>
<div class="a" style="left:382px;top:0;width:1px;height:35px;background:#e6d9d9"></div>
<div class="a" style="left:582px;top:0;width:1px;height:35px;background:#e6d9d9"></div>
<div class="a" style="left:782px;top:0;width:1px;height:35px;background:#e6d9d9"></div>
<div class="a" style="left:982px;top:0;width:1px;height:35px;background:#e6d9d9"></div>
<div class="a" style="left:1102px;top:0;width:1px;height:35px;background:#e6d9d9"></div>
<div class="a" style="left:1262px;top:0;width:1px;height:35px;background:#e6d9d9"></div>
<div class="t" style="left:32px;width:50px;text-align:center;top:10px;color:#333">15</div>
<div class="t" style="left:93px;top:10px;color:#333;letter-spacing:-0.2px">Chưa chuẩn hóa</div>
<div class="a" style="left:226px;top:8px;width:0;height:26px;border-left:1px dotted #777"></div>
<div class="a" style="left:227px;top:22px;width:10px;height:0;border-top:1px dotted #777"></div>
<div class="t" style="left:243px;top:10px;color:#333">NVS</div>
<div class="t" style="left:393px;top:10px;color:#333;letter-spacing:-0.05px">Nhà vệ sinh</div>
<div class="t" style="left:593px;top:10px;color:#333;letter-spacing:-0.13px;width:188px;overflow:hidden">Các vật kiến trúc khác</div>
<div class="t" style="left:793px;top:10px;color:#333;letter-spacing:-0.77px">TRƯỜNG THCS NGUYỄN VIẾT ...</div>
<div class="t" style="right:206px;top:10px;color:#333">4</div>
<div class="t" style="right:46px;top:10px;color:#333">120.000.000</div>
</div>
<div class="a" style="left:0;top:71px;width:1298px;height:1px;background:#fae2df"></div>
<div class="a" style="left:0;top:71px;width:2px;height:35px;background:#3550d8"></div>
<div class="a" style="left:0;top:597px;width:1298px;height:2px;background:#f7f7f7"></div>
<div class="a" style="left:0;top:599px;width:1298px;height:1px;background:#aaaaaa"></div>
</div>
<div class="a bottom">
<div class="t" style="left:16px;top:7px;color:#3550d8;letter-spacing:0px">Lịch sử biến động</div>
<div class="a" style="left:16px;top:30px;width:104px;height:2px;background:#3550d8"></div>
<div class="t" style="left:152px;top:7px;color:#222;letter-spacing:-0.1px">Thông tin kê khai</div>
<div class="t" style="left:282px;top:7px;color:#222;letter-spacing:-0.1px">Tệp đính kèm</div>
<div class="a" style="left:0;top:33px;width:1298px;height:35px;background:#f4f4f4"></div>
<div class="a" style="left:0;top:68px;width:1298px;height:1px;background:#e0e0e0"></div>
<div class="a" style="left:0;top:104px;width:1298px;height:1px;background:#e0e0e0"></div>
<div class="a" style="left:0;top:138px;width:1298px;height:1px;background:#e0e0e0"></div>
<div class="a" style="left:59px;top:33px;width:1px;height:105px;background:#e3e3e3"></div>
<div class="a" style="left:180px;top:33px;width:1px;height:105px;background:#e3e3e3"></div>
<div class="a" style="left:329px;top:33px;width:1px;height:105px;background:#e3e3e3"></div>
<div class="a" style="left:479px;top:33px;width:1px;height:105px;background:#e3e3e3"></div>
<div class="a" style="left:774px;top:33px;width:1px;height:105px;background:#e3e3e3"></div>
<div class="a" style="left:924px;top:33px;width:1px;height:105px;background:#e3e3e3"></div>
<div class="a" style="left:1073px;top:33px;width:1px;height:105px;background:#e3e3e3"></div>
<div class="a" style="left:1224px;top:33px;width:1px;height:105px;background:#e3e3e3"></div>
<div class="t hcell" style="left:0px;width:59px;text-align:center;top:43px">STT</div>
<div class="t hcell" style="left:70px;top:43px">Số chứng từ</div>
<div class="t hcell" style="left:180px;width:149px;text-align:center;top:43px">Ngày chứng từ</div>
<div class="t hcell" style="left:329px;width:150px;text-align:center;top:43px">Ngày biến động</div>
<div class="t hcell" style="left:490px;top:43px">Nội dung</div>
<div class="t hcell" style="right:385px;top:43px">Nguyên giá</div>
<div class="t hcell" style="right:235px;top:43px">Số tiền thực hiện</div>
<div class="t hcell" style="right:85px;top:43px">Giá trị HM/KH</div>
<div class="t hcell" style="left:1273px;top:43px">Hao mòn</div>
<div class="t" style="left:0px;width:59px;text-align:center;top:79px;color:#333">1</div>
<div class="t" style="left:70px;top:79px;color:#3550d8">GT 000002</div>
<div class="t" style="left:180px;width:149px;text-align:center;top:79px;color:#333">30/12/2022</div>
<div class="t" style="left:329px;width:150px;text-align:center;top:79px;color:#333">30/12/2022</div>
<div class="t" style="left:490px;top:79px;color:#333">Kiểm kê</div>
<div class="t" style="right:385px;top:79px;color:#333">13.300.000</div>
<div class="t" style="right:235px;top:79px;color:#333">0</div>
<div class="t" style="right:85px;top:79px;color:#333">0</div>
<div class="t" style="left:0px;width:59px;text-align:center;top:115px;color:#333">2</div>
<div class="t" style="left:70px;top:115px;color:#3550d8">GT000005</div>
<div class="t" style="left:180px;width:149px;text-align:center;top:115px;color:#333">01/12/2022</div>
<div class="t" style="left:329px;width:150px;text-align:center;top:115px;color:#333">01/12/2022</div>
<div class="t" style="left:490px;top:115px;color:#333">Ghi tăng</div>
<div class="t" style="right:385px;top:115px;color:#333">13.300.000</div>
<div class="t" style="right:235px;top:115px;color:#333">0</div>
<div class="t" style="right:85px;top:115px;color:#333">0</div>
</div>
<div class="a" style="left:1349px;top:310px;width:15px;height:16px;background:#4660f8;border-radius:2px 0 0 0"></div>
<svg class="a" style="left:1352px;top:313px" width="9" height="10" viewBox="0 0 9 10"><path d="M3 1.5l3.5 3.5L3 8.5" fill="none" stroke="#fff" stroke-width="1.2"/></svg>
<div class="a" style="left:1325px;top:327px;width:39px;height:84px;background:#4660f8;border-radius:8px 0 0 8px"></div>
<svg class="a" style="left:1335px;top:337px" width="22" height="21" viewBox="0 0 22 21"><path d="M11 1.5a9.5 9 0 1 1-4.6 16.8L1.5 19.5l2-3.8A9 9 0 0 1 11 1.5z" fill="#fff"/><path d="M7.5 8v4.5M11 6v8.5M14.5 8v4.5" stroke="#4660f8" stroke-width="1.8"/></svg>
<svg class="a" style="left:1332px;top:375px" width="26" height="24" viewBox="0 0 26 24"><path d="M4 5l.8 1.6 1.7.2-1.3 1.2.4 1.7L4 8.8l-1.6.9.4-1.7L1.5 6.8l1.7-.2z M13 1l.8 1.6 1.7.2-1.3 1.2.4 1.7L13 4.8l-1.6.9.4-1.7L10.5 2.8l1.7-.2z M22 5l.8 1.6 1.7.2-1.3 1.2.4 1.7L22 8.8l-1.6.9.4-1.7-1.3-1.2 1.7-.2z" fill="#fff"/><path d="M6 13h3v10H6z M10.5 13l3-4.5c.8-1 2.3-.4 2.1.9L15 13h4.2c1 0 1.8 1 1.5 2l-1.6 6.2c-.2.8-1 1.3-1.8 1.3h-6.8z" fill="#fff"/></svg>
<div class="a" style="left:0;top:851px;width:1364px;height:10px;background:#d2d5db"></div>
<div class="a overlay"></div>
<div class="a" style="left:1359px;top:700px;width:14px;height:140px;background:rgba(255,255,255,0.45);filter:blur(4px)"></div>
<div class="a modal">
<div class="t" style="left:15px;top:10px;font-size:18px;line-height:22px;color:#111;letter-spacing:-0.01px">Kết quả cập nhật tự động theo Quyết định 34/2023/QĐ-UBND</div>
<svg class="a" style="left:616px;top:13px" width="16" height="16" viewBox="0 0 16 16"><path d="M1.5 1.5l13 13M14.5 1.5l-13 13" stroke="#555" stroke-width="1.9"/></svg>
<div class="a" style="left:0;top:43px;width:656px;height:1px;background:#dedede"></div>
<div class="card" style="left:16px;background:#e2ecfd;border-left:3px solid #4a92f6">
<div class="clabel">Tổng số tài sản</div>
<div class="cnum" style="color:#4b93f7">40</div>
<div class="ibox"><div class="a" style="left:10px;top:10px"><svg width="30" height="30" viewBox="0 0 30 30"><g fill="none" stroke="#3e5ef2" stroke-width="1.7"><rect x="1.5" y="1.5" width="11" height="11" rx="2"/><rect x="17.5" y="1.5" width="11" height="11" rx="2"/><rect x="1.5" y="17.5" width="11" height="11" rx="2"/><path d="M17 18h12M17 23h12M17 28h12"/></g></svg></div></div>
</div>
<div class="card" style="left:228px;background:#fff0e2;border-left:3px solid #ff9d43">
<div class="clabel">Chưa cập nhật</div>
<div class="cnum" style="color:#ff9f47">19</div>
<div class="ibox"><div class="a" style="left:10px;top:10px"><svg width="30" height="30" viewBox="0 0 30 30"><g fill="none" stroke="#ff6a00" stroke-width="2.4" stroke-linecap="round"><path d="M2.5 2.5l5 5M7.5 2.5l-5 5M2.5 13l5 5M7.5 13l-5 5M2.5 23l5 5M7.5 23l-5 5"/><path d="M13 5h15M13 15.5h15M13 25.5h15"/></g></svg></div></div>
</div>
<div class="card" style="left:440px;background:#e7f6f7;border-left:3px solid #5fc6d3">
<div class="clabel">Đã cập nhật</div>
<div class="cnum" style="color:#6acad6">21</div>
<div class="ibox"><div class="a" style="left:10px;top:10px"><svg width="30" height="30" viewBox="0 0 30 30"><g fill="none" stroke="#26ad8a" stroke-width="2.4" stroke-linecap="round" stroke-linejoin="round"><path d="M1.5 5l2.6 2.5L8.5 3M1.5 15l2.6 2.5L8.5 13M1.5 25l2.6 2.5L8.5 23"/><path d="M13 5h15M13 15h15M13 25h15"/></g></svg></div></div>
</div>
<div class="t" style="left:16px;top:168px;font-weight:700;color:#2db47f;letter-spacing:-0.4px">Đã tự động cập nhật thành công 21 tài sản!</div>
<div class="t" style="left:16px;top:197px;color:#3a3a3a;letter-spacing:-0.03px">Còn 19 tài sản chưa được tự động cập nhật, anh/chị vui lòng <span style="color:#3f62f2;font-weight:700;letter-spacing:-0.5px">Cập nhật thủ công</span> cho các tài sản này.</div>
<div class="a" style="left:0;top:231px;width:656px;height:1px;background:#e2e4e8"></div>
<div class="a" style="left:439px;top:241px;width:62px;height:32px;border:1px solid #d5d8dd;border-radius:4px;background:#fff"></div>
<div class="t" style="left:440px;width:62px;text-align:center;top:249px;color:#222;letter-spacing:-0.7px">Đóng</div>
<div class="a" style="left:510px;top:241px;width:130px;height:32px;border-radius:4px;background:#4262ee"></div>
<div class="t" style="left:510px;width:130px;text-align:center;top:249px;color:#fff;font-weight:700;letter-spacing:-0.9px">Cập nhật thủ công</div>
<div class="a" style="left:502px;top:230px;width:148px;height:49px;border:3px solid #d7171e"></div>
</div>
</body></html>
